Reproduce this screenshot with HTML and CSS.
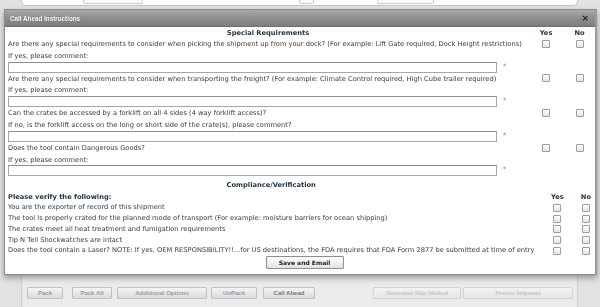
FILE: index.html
```html
<!DOCTYPE html>
<html>
<head>
<meta charset="utf-8">
<link rel="stylesheet" href="styles.css">
</head>
<body>
<div class="page">
  <div class="top-panel">
    <span class="tbox tb1"></span>
    <span class="tbox tb2"></span>
    <span class="tbox tb3"></span>
  </div>
  <div class="mid"></div>
  <div class="bottom-panel">
    <span class="pbtn b-pack">Pack</span>
    <span class="pbtn b-packall">Pack All</span>
    <span class="pbtn b-addl">Additional Options</span>
    <span class="pbtn b-unpack">UnPack</span>
    <span class="pbtn b-call">Call Ahead</span>
    <span class="pbtn dis b-det">Determine Ship Method</span>
    <span class="pbtn dis b-proc">Process Shipment</span>
  </div>
</div>

<div class="dialog">
  <div class="titlebar">
    <span class="title">Call Ahead Instructions</span>
    <span class="close">&#215;</span>
  </div>
  <div class="content">
    <div class="grid sec1">
      <div class="hdr">Special Requirements</div><div class="colh">Yes</div><div class="colh">No</div>

      <div class="q">Are there any special requirements to consider when picking the shipment up from your dock? (For example: Lift Gate required, Dock Height restrictions)</div><div class="cb"><span class="box"></span></div><div class="cb"><span class="box"></span></div>
      <div class="q full">If yes, please comment:</div>
      <div class="inrow full"><span class="field"></span><span class="req">*</span></div>

      <div class="q">Are there any special requirements to consider when transporting the freight? (For example: Climate Control required, High Cube trailer required)</div><div class="cb"><span class="box"></span></div><div class="cb"><span class="box"></span></div>
      <div class="q full">If yes, please comment:</div>
      <div class="inrow full"><span class="field"></span><span class="req">*</span></div>

      <div class="q">Can the crates be accessed by a forklift on all 4 sides (4 way forklift access)?</div><div class="cb"><span class="box"></span></div><div class="cb"><span class="box"></span></div>
      <div class="q full">If no, is the forklift access on the long or short side of the crate(s), please comment?</div>
      <div class="inrow full"><span class="field"></span><span class="req">*</span></div>

      <div class="q">Does the tool contain Dangerous Goods?</div><div class="cb"><span class="box"></span></div><div class="cb"><span class="box"></span></div>
      <div class="q full">If yes, please comment:</div>
      <div class="inrow full"><span class="field"></span><span class="req">*</span></div>
    </div>

    <div class="grid sec2">
      <div class="hdr full">Compliance/Verification</div>
      <div class="sub">Please verify the following:</div><div class="colh y2">Yes</div><div class="colh">No</div>

      <div class="r">You are the exporter of record of this shipment</div><div class="cb y2"><span class="box"></span></div><div class="cb"><span class="box"></span></div>
      <div class="r">The tool is properly crated for the planned mode of transport (For example: moisture barriers for ocean shipping)</div><div class="cb y2"><span class="box"></span></div><div class="cb"><span class="box"></span></div>
      <div class="r">The crates meet all heat treatment and fumigation requirements</div><div class="cb y2"><span class="box"></span></div><div class="cb"><span class="box"></span></div>
      <div class="r">Tip N Tell Shockwatches are intact</div><div class="cb y2"><span class="box"></span></div><div class="cb"><span class="box"></span></div>
      <div class="r">Does the tool contain a Laser? NOTE: If yes, OEM RESPONSIBILITY!!...for US destinations, the FDA requires that FDA Form 2877 be submitted at time of entry</div><div class="cb y2"><span class="box"></span></div><div class="cb"><span class="box"></span></div>
    </div>

    <div class="actions"><span class="save">Save and Email</span></div>
  </div>
</div>
</body>
</html>
```

FILE: styles.css
```css
* { box-sizing: border-box; margin: 0; padding: 0; }

html, body {
  width: 600px;
  height: 307px;
  overflow: hidden;
}

body {
  background: #e2e2e2;
  font-family: "DejaVu Sans", Verdana, sans-serif;
  position: relative;
}

/* background page */
.page {
  display: flex;
  flex-direction: column;
  height: 307px;
  padding-left: 21px;
  padding-right: 22px;
}

.top-panel {
  height: 6px;
  background: #ffffff;
  border: 1px solid #c4c4c4;
  border-top: none;
  border-radius: 0 0 5px 5px;
  display: flex;
  align-items: flex-end;
  overflow: hidden;
}

.tbox {
  display: block;
  height: 10px;
  margin-bottom: 1px;
  border: 1px solid #c8c8c8;
  border-radius: 2px;
  background: #fbfbfb;
}
.tb1 { margin-left: 61px; width: 60px; }
.tb2 { margin-left: 156px; width: 15px; }
.tb3 { margin-left: 63px; width: 57px; }

.mid { flex: 1; }

.bottom-panel {
  height: 31px;
  background: #ebebeb;
  border-left: 1px solid #cdcdcd;
  border-right: 1px solid #cdcdcd;
  display: flex;
  align-items: flex-start;
  padding-top: 11px;
  padding-left: 5px;
}

.pbtn {
  display: flex;
  align-items: center;
  justify-content: center;
  height: 12px;
  border: 1px solid #c2c2c2;
  border-radius: 1px;
  background: linear-gradient(#f4f4f4, #dcdcdc);
  font-family: "Liberation Sans", Arial, sans-serif;
  font-size: 6px;
  font-weight: bold;
  color: #9a9a9a;
  white-space: nowrap;
}
.pbtn.dis {
  background: linear-gradient(#f2f2f2, #e6e6e6);
  border-color: #d2d2d2;
  color: #c4c4c4;
  font-family: "Liberation Serif", "Times New Roman", serif;
}
.b-pack { width: 36px; }
.b-packall { width: 40px; margin-left: 9px; }
.b-addl { width: 90px; margin-left: 5px; }
.b-unpack { width: 46px; margin-left: 4px; }
.b-call { width: 52px; margin-left: 6px; color: #777; }
.b-det { width: 88px; margin-left: 58px; }
.b-proc { width: 110px; margin-left: 2px; }

/* dialog (modal overlay) */
.dialog {
  position: absolute;
  left: 4px;
  top: 9px;
  width: 593px;
  height: 266px;
  background: #ffffff;
  border: 1px solid #8c8c8c;
  border-right: 2px solid #9a9a9a;
  box-shadow: 0 3px 6px rgba(0, 0, 0, 0.35);
  display: flex;
  flex-direction: column;
  will-change: transform;
}

.titlebar {
  height: 17px;
  flex: none;
  background: linear-gradient(#a8a8a8, #8a8a8a 60%, #7e7e7e);
  border-bottom: 1px solid #6e6e6e;
  display: flex;
  align-items: center;
  justify-content: space-between;
  padding: 0 6px 0 5px;
}

.title {
  font-family: "Liberation Sans", Arial, sans-serif;
  font-size: 6.3px;
  font-weight: bold;
  color: #ffffff;
  text-shadow: 0 0 1px rgba(0, 0, 0, 0.4);
}

.close {
  font-family: "DejaVu Sans", sans-serif;
  font-size: 9px;
  font-weight: bold;
  color: #1e1e1e;
  line-height: 1;
}

.content {
  padding-left: 3px;
  font-size: 6.7px;
  color: #3a3a3a;
}

.grid {
  display: grid;
  grid-template-columns: 1fr 36px 31px;
}

.full { grid-column: 1 / -1; }

.hdr {
  height: 11px;
  line-height: 10.5px;
  padding-top: 0.5px;
  text-align: center;
  font-weight: bold;
  color: #1d3140;
}
.sec2 .hdr {
  margin-top: 2px;
  height: 13px;
  line-height: 12px;
  padding-top: 1px;
  padding-right: 67px;
}

.colh {
  height: 11px;
  line-height: 10.5px;
  padding-top: 0.5px;
  text-align: center;
  font-weight: bold;
  color: #1d3140;
}
.sec2 .colh { padding-top: 1.5px; line-height: 9.5px; }
.colh.y2, .cb.y2 { padding-left: 10px; }

.q {
  height: 11.8px;
  padding-top: 1px;
  line-height: 10.8px;
  white-space: nowrap;
}

.cb {
  display: flex;
  align-items: center;
  justify-content: center;
}

.box {
  display: block;
  width: 8px;
  height: 8px;
  border: 1px solid #9c9c9c;
  border-radius: 1px;
  background: linear-gradient(#ffffff, #e4e4e4);
}

.inrow {
  height: 11px;
  display: flex;
  align-items: flex-start;
}

.field {
  display: block;
  width: 489px;
  height: 11px;
  border: 1px solid #a6a6a6;
  border-top-color: #8e8e8e;
  background: #ffffff;
}

.req {
  color: #e53030;
  font-size: 6px;
  margin-left: 6px;
  line-height: 8px;
}

.sub {
  height: 11px;
  padding-top: 1.5px;
  line-height: 9.5px;
  font-weight: bold;
  color: #1d3140;
}

.r {
  height: 10.75px;
  padding-top: 1px;
  line-height: 9.75px;
  white-space: nowrap;
}

.actions {
  display: flex;
  justify-content: center;
  padding-left: 6px;
}

.save {
  display: flex;
  align-items: center;
  justify-content: center;
  width: 78px;
  height: 13px;
  border: 1px solid #8e8e8e;
  border-radius: 1px;
  background: linear-gradient(#ffffff, #e2e2e2);
  font-weight: bold;
  color: #1a1a1a;
  font-size: 6px;
}
```
